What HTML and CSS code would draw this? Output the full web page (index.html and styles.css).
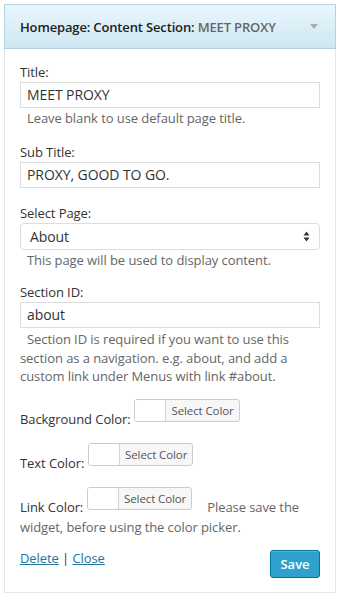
FILE: index.html
```html
<!DOCTYPE html>
<html>
<head>
<meta charset="utf-8">
<link rel="stylesheet" href="styles.css">
</head>
<body>
<div class="widget">
  <div class="widget-top">
    <h4 class="widget-title">Homepage: Content Section:<span class="in-title"> MEET PROXY</span></h4>
    <span class="toggle"></span>
  </div>
  <div class="widget-inside">
    <div class="field">
      <label class="lbl">Title:</label>
      <div class="input">MEET PROXY</div>
      <div class="desc">Leave blank to use default page title.</div>
    </div>
    <div class="field">
      <label class="lbl">Sub Title:</label>
      <div class="input">PROXY, GOOD TO GO.</div>
    </div>
    <div class="field short">
      <label class="lbl">Select Page:</label>
      <div class="select">
        <span>About</span>
        <svg class="arrows" width="7" height="11" viewBox="0 0 7 11"><path d="M3.5 0.5 L6.5 4.5 H0.5 Z M3.5 10.5 L6.5 6.5 H0.5 Z" fill="#333"/></svg>
      </div>
      <div class="desc">This page will be used to display content.</div>
    </div>
    <div class="field before-colors">
      <label class="lbl">Section ID:</label>
      <div class="input">about</div>
      <div class="desc multi">Section ID is required if you want to use this section as a navigation. e.g. about, and add a custom link under Menus with link #about.</div>
    </div>
    <div class="color-row">Background Color: <span class="picker"><span class="swatch"></span><span class="pick-text">Select Color</span></span></div>
    <div class="color-row">Text Color: <span class="picker"><span class="swatch"></span><span class="pick-text">Select Color</span></span></div>
    <div class="color-row last">Link Color: <span class="picker"><span class="swatch"></span><span class="pick-text">Select Color</span></span><span class="note">Please save the widget, before using the color picker.</span></div>
    <div class="controls">
      <div class="links"><a href="#">Delete</a> | <a href="#">Close</a></div>
      <button class="save">Save</button>
    </div>
  </div>
</div>
</body>
</html>
```
FILE: styles.css
```css
html, body {
  margin: 0;
  padding: 0;
  background: #fff;
}
body {
  font-family: "Open Sans", "Liberation Sans", sans-serif;
  font-size: 13px;
  line-height: 18px;
  letter-spacing: -0.08px;
  color: #333;
}
.widget {
  margin: 4px;
  width: 332px;
}
.widget-top {
  height: 43px;
  border: 1px solid #b1d3e4;
  background: linear-gradient(to bottom, #e9f6fc, #cfe7f3);
  display: flex;
  align-items: center;
  justify-content: space-between;
  padding: 0 17px 0 15px;
}
.widget-title {
  margin: 0;
  font-size: 13px;
  font-weight: 600;
  color: #222;
  line-height: 18px;
  letter-spacing: -0.15px;
}
.in-title {
  color: #666;
}
.toggle {
  width: 0;
  height: 0;
  border-left: 4px solid transparent;
  border-right: 4px solid transparent;
  border-top: 5px solid #aaa;
}
.widget-inside {
  border: 1px solid #e5e5e5;
  border-top: none;
  padding: 14px 15px 14px;
}
.field {
  margin-bottom: 16px;
}
.field.short {
  margin-bottom: 14px;
}
.field.before-colors {
  margin-bottom: 13.5px;
}
.lbl {
  display: block;
  margin-bottom: 1px;
}
.input {
  height: 24px;
  border: 1px solid #ddd;
  padding: 0 6px;
  font-size: 14px;
  line-height: 24px;
  color: #333;
}
.select {
  height: 25px;
  border: 1px solid #ddd;
  border-radius: 4px;
  padding: 0 9px 0 9px;
  font-size: 14px;
  line-height: 25px;
  color: #333;
  display: flex;
  justify-content: space-between;
  align-items: center;
}
.desc {
  color: #666;
  margin-top: 1px;
  text-indent: 7px;
}
.desc.multi {
  line-height: 18.5px;
  margin-top: 2px;
}
.color-row {
  line-height: 20px;
  margin-bottom: 14px;
}
.color-row.last {
  margin-bottom: 12px;
}
.picker {
  display: inline-block;
  vertical-align: baseline;
  overflow: hidden;
  height: 21px;
  border: 1px solid #ccc;
  border-radius: 3px;
  background: #f7f7f7;
  margin-bottom: 2px;
  letter-spacing: -0.1px;
}
.swatch {
  display: inline-block;
  width: 30px;
  height: 21px;
  background: #fff;
  border-right: 1px solid #d4d4d4;
  vertical-align: top;
}
.pick-text {
  display: inline-block;
  vertical-align: top;
  font-size: 11.5px;
  line-height: 21px;
  color: #555;
  padding: 0 5px 0 5.5px;
}
.note {
  color: #666;
  margin-left: 15px;
}
.controls {
  display: flex;
  justify-content: space-between;
  align-items: flex-start;
}
.links {
  color: #333;
}
.links a {
  color: #21759b;
  text-decoration: underline;
}
.save {
  font-family: "Open Sans", "Liberation Sans", sans-serif;
  font-size: 13px;
  font-weight: 600;
  color: #fff;
  background: #2ea2cc;
  border: 1px solid #0074a2;
  border-radius: 3px;
  height: 28px;
  width: 50px;
  padding: 0;
  margin-top: 1px;
  box-shadow: inset 0 1px 0 rgba(120,200,230,0.5);
}
```
